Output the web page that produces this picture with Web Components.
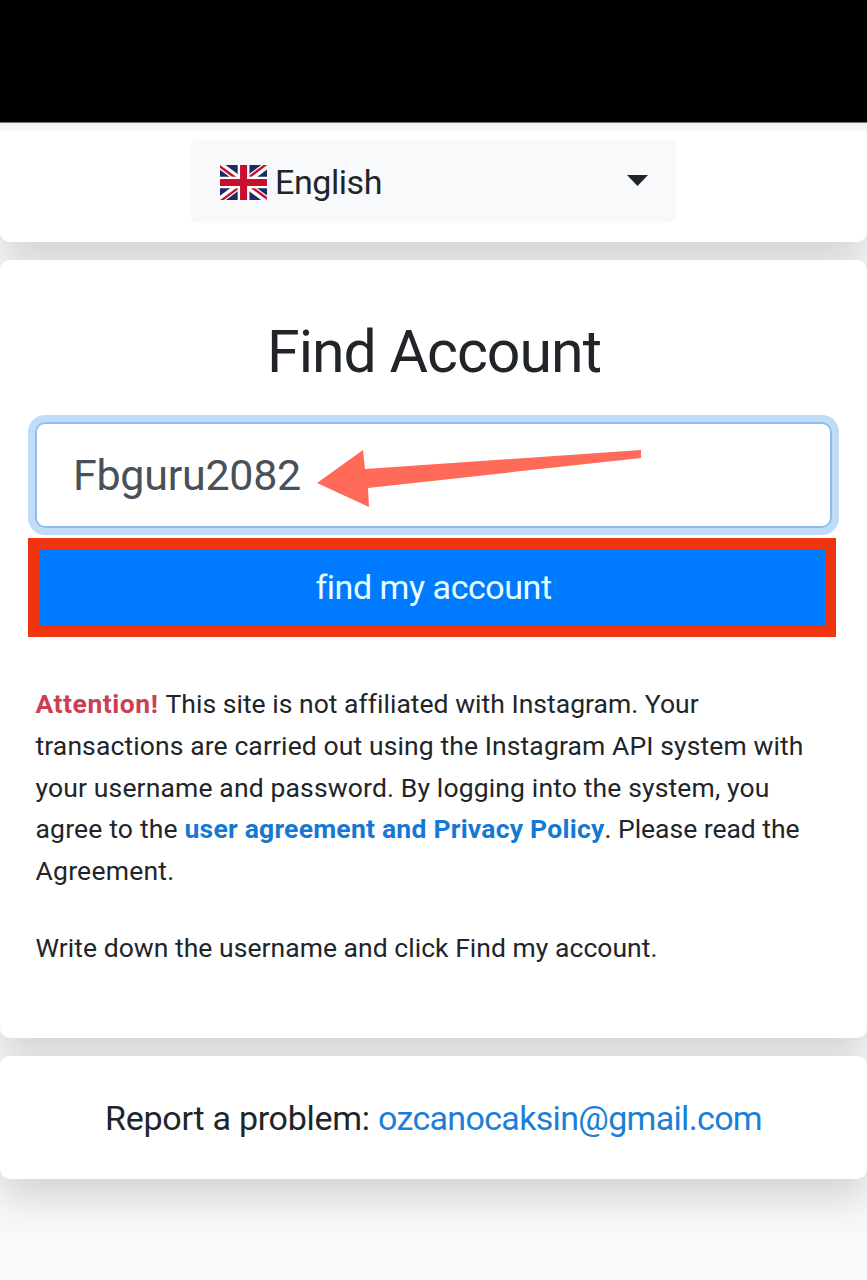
<!DOCTYPE html>
<html lang="en">
<head>
<meta charset="utf-8">
<title>Find Account</title>
<style>
    body {
        margin: 0;
        height: 1280px;
        overflow: hidden;
        background: #f8f9fb;
        color: #212529;
        font-family: Roboto, "Noto Sans", sans-serif;
    }
</style>
</head>
<body>

<find-page>
    <page-card class="lang">
        <language-select><fit-text width="107">English</fit-text></language-select>
    </page-card>

    <page-card class="main">
        <find-form heading="Find Account" value="Fbguru2082" action="find my account"></find-form>
        <notice-text></notice-text>
    </page-card>

    <page-card class="report">
        <report-line email="ozcanocaksin@gmail.com"></report-line>
    </page-card>
</find-page>

<script>

    const attach = function (element, html) {
        const template = document.createElement('template');
        template.innerHTML = html;
        const root = element.attachShadow({ mode: 'open' });
        root.appendChild(template.content.cloneNode(true));
        return root;
    };

    // Run of text tracked so that it takes up the given width
    class FitText extends HTMLElement {

        constructor() {
            super();
            attach(this, `
                <style>
                    :host {
                        display: inline-block;
                        white-space: nowrap;
                    }
                    span {
                        white-space: pre;
                    }
                </style>
                <span><slot></slot></span>
            `);
        }

        connectedCallback() {
            const span = this.shadowRoot.querySelector('span');
            const width = Number(this.getAttribute('width'));
            const natural = span.getBoundingClientRect().width;
            span.style.letterSpacing = (width - natural) / this.textContent.length + 'px';
        }

    }

    class FindPage extends HTMLElement {

        constructor() {
            super();
            attach(this, `
                <style>
                    :host {
                        display: flex;
                        flex-direction: column;
                        gap: 18px;
                    }
                    .status-bar {
                        box-sizing: border-box;
                        height: 123px;
                        margin-bottom: -18px;
                        background: #000;
                        border-bottom: 1px solid #777;
                    }
                    ::slotted(.lang) {
                        height: 119px;
                        border-radius: 0 0 10px 10px;
                        background: linear-gradient(#f1f1f1, #f7f7f7 7px, #fff 9px);
                    }
                    ::slotted(.main) {
                        height: 778px;
                    }
                    ::slotted(.report) {
                        height: 123px;
                    }
                </style>
                <div class="status-bar"></div>
                <slot></slot>
            `);
        }

    }

    class PageCard extends HTMLElement {

        constructor() {
            super();
            attach(this, `
                <style>
                    :host {
                        display: block;
                        box-sizing: border-box;
                        background: #fff;
                        border-radius: 10px;
                        box-shadow: 0 20px 38px rgba(0, 0, 0, .15);
                    }
                </style>
                <slot></slot>
            `);
        }

    }

    class LanguageSelect extends HTMLElement {

        constructor() {
            super();
            attach(this, `
                <style>
                    :host {
                        display: block;
                        padding-top: 17px;
                    }
                    .select {
                        display: flex;
                        align-items: center;
                        box-sizing: border-box;
                        width: 485px;
                        height: 83px;
                        margin-left: 191px;
                        padding: 0 28px 0 29px;
                        border-radius: 6px;
                        background: #f8f9fb;
                        font-size: 34px;
                    }
                    .flag {
                        width: 47px;
                        height: 35px;
                        margin: 1px 8px 0 0;
                    }
                    .caret {
                        width: 21px;
                        height: 11px;
                        margin: -3px 0 0 auto;
                    }
                </style>
                <div class="select">
                    <svg class="flag" viewBox="0 0 640 480" preserveAspectRatio="none">
                        <path fill="#1d2a66" d="M0 0h640v480H0z"/>
                        <path fill="#fff" d="M75 0l244 181L562 0h78v62L400 241l240 178v61h-80L320 301 81 480H0v-60l239-178L0 64V0z"/>
                        <path fill="#c8102e" d="M424 281l216 159v40L369 281zm-184 20l6 35L54 480H0zM640 0v3L391 191l2-44L590 0zM0 0l239 176h-60L0 42z"/>
                        <path fill="#fff" d="M241 0v480h160V0zM0 160v160h640V160z"/>
                        <path fill="#c8102e" d="M0 193v96h640v-96zM273 0v480h96V0z"/>
                    </svg>
                    <slot></slot>
                    <svg class="caret" viewBox="0 0 21 11"><path fill="#212529" d="M0 0h21L10.500 11z"/></svg>
                </div>
            `);
        }

    }

    class FindForm extends HTMLElement {

        constructor() {
            super();
            attach(this, `
                <style>
                    :host {
                        display: block;
                        padding: 52px 31px 0 28px;
                    }
                    h1 {
                        margin: 0 0 0 239px;
                        height: 80px;
                        font-size: 59px;
                        font-weight: 400;
                        line-height: 80px;
                    }
                    .field {
                        position: relative;
                        box-sizing: border-box;
                        width: 797px;
                        height: 106px;
                        margin: 30px 0 0 7px;
                        padding-left: 36px;
                        border: 2px solid #8fbce8;
                        border-radius: 10px;
                        box-shadow: 0 0 0 7px #c0dcf8;
                        color: #495057;
                        font-size: 43px;
                        line-height: 103px;
                    }
                    .arrow {
                        position: absolute;
                        left: 280px;
                        top: 26px;
                        width: 326px;
                        height: 60px;
                    }
                    .submit {
                        display: block;
                        box-sizing: border-box;
                        width: 808px;
                        height: 99px;
                        margin-top: 10px;
                        padding: 0 0 2px 3px;
                        border: 11px solid #f03410;
                        background: #007bff;
                        color: #e8ffff;
                        font: inherit;
                        font-size: 34px;
                    }
                </style>
                <h1><fit-text width="334">${this.getAttribute('heading')}</fit-text></h1>
                <div class="field">
                    <fit-text width="228">${this.getAttribute('value')}</fit-text>
                    <svg class="arrow" viewBox="0 0 326 60"><path fill="#ff6a59" d="M0 33L46 0l2 19L324 0v8L51 38l1 19z"/></svg>
                </div>
                <button class="submit"><fit-text width="235">${this.getAttribute('action')}</fit-text></button>
            `);
        }

    }

    class NoticeText extends HTMLElement {

        constructor() {
            super();
            attach(this, `
                <style>
                    :host {
                        display: block;
                        padding: 46px 0 0 35.500px;
                        font-size: 26.500px;
                    }
                    p {
                        margin: 0 0 35px;
                    }
                    .line {
                        display: flex;
                        height: 41.800px;
                        line-height: 41.400px;
                    }
                    strong {
                        color: #cc3f52;
                    }
                    a {
                        color: #1478d4;
                        font-weight: 700;
                    }
                </style>
                <p>
                    <span class="line"><strong><fit-text width="130">Attention! </fit-text></strong><fit-text width="531">This site is not affiliated with Instagram. Your</fit-text></span>
                    <span class="line"><fit-text width="768">transactions are carried out using the Instagram API system with</fit-text></span>
                    <span class="line"><fit-text width="734">your username and password. By logging into the system, you</fit-text></span>
                    <span class="line"><fit-text width="149">agree to the </fit-text><a><fit-text width="420">user agreement and Privacy Policy</fit-text></a><fit-text width="195">. Please read the</fit-text></span>
                    <span class="line"><fit-text width="139">Agreement.</fit-text></span>
                </p>
                <p><span class="line"><fit-text width="622">Write down the username and click Find my account.</fit-text></span></p>
            `);
        }

    }

    class ReportLine extends HTMLElement {

        constructor() {
            super();
            attach(this, `
                <style>
                    :host {
                        display: flex;
                        padding-left: 105px;
                        font-size: 34px;
                        line-height: 124px;
                    }
                    .email {
                        color: #1c7fd6;
                    }
                </style>
                <fit-text width="273">Report a problem: </fit-text>
                <fit-text class="email" width="384">${this.getAttribute('email')}</fit-text>
            `);
        }

    }

    customElements.define('find-page', FindPage);
    customElements.define('page-card', PageCard);
    customElements.define('language-select', LanguageSelect);
    customElements.define('find-form', FindForm);
    customElements.define('notice-text', NoticeText);
    customElements.define('report-line', ReportLine);
    // Last, so that every text is measured in its final font
    customElements.define('fit-text', FitText);

</script>
</body>
</html>
